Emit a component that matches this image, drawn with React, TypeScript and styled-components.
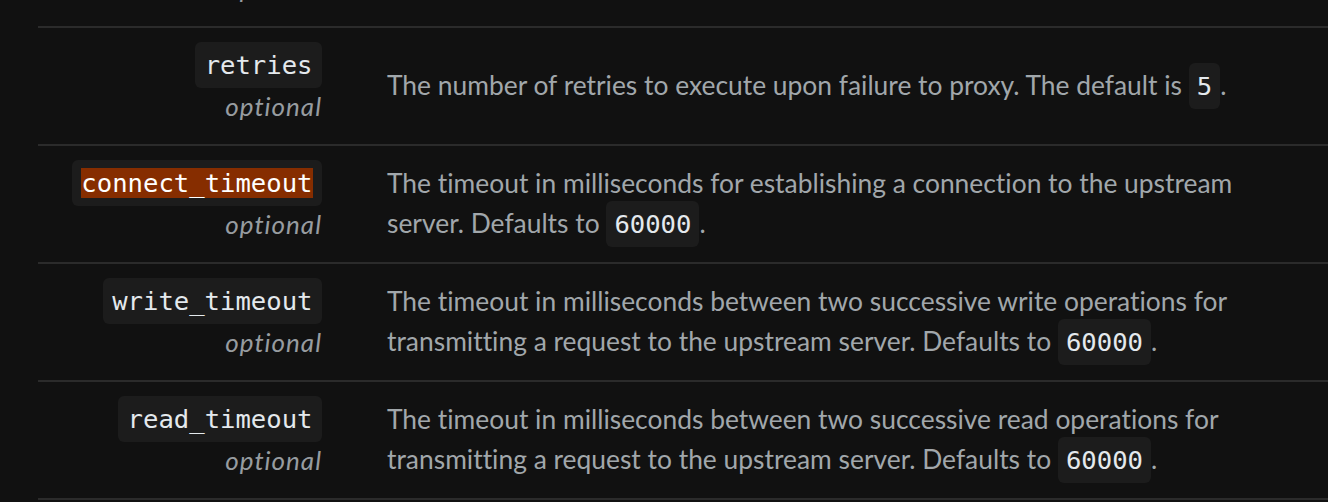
import React from "react";
import styled, { createGlobalStyle } from "styled-components";

const GlobalStyle = createGlobalStyle`
  html, body {
    margin: 0;
    padding: 0;
    background: #111111;
    overflow: hidden;
  }
  body {
    font-family: Lato, "Noto Sans", sans-serif;
    font-variant-ligatures: none;
  }
`;

const Page = styled.div`
  width: 1328px;
  height: 502px;
  overflow: hidden;
  background: #111111;
`;

const Table = styled.div`
  margin-left: 38px;
  display: flex;
  flex-direction: column;
`;

const TopStub = styled.div`
  height: 26px;
  overflow: hidden;
  display: flex;
  align-items: flex-end;
  border-bottom: 2px solid #2b2b2b;
`;

const StubCell = styled.div`
  width: 284px;
  display: flex;
  justify-content: flex-end;
  margin-bottom: 14px;
  flex-shrink: 0;
`;

const Row = styled.div`
  display: grid;
  grid-template-columns: 284px 1fr;
  column-gap: 65px;
  align-items: center;
  border-bottom: 2px solid #2b2b2b;
  padding: 14px 0;
  min-height: 88px;
`;

const NameCell = styled.div`
  display: flex;
  flex-direction: column;
  align-items: flex-end;
`;

const NameBadge = styled.code`
  font-family: "DejaVu Sans Mono", "Liberation Mono", monospace;
  font-size: 25.6px;
  line-height: 30px;
  color: #e4e9ed;
  background: #1c1c1c;
  border-radius: 6px;
  padding: 8px 9.5px;
`;

const Mark = styled.mark<{ $active?: boolean }>`
  background: ${(p) => (p.$active ? "#862d00" : "transparent")};
  color: ${(p) => (p.$active ? "#ffffff" : "inherit")};
`;

const Optional = styled.span`
  display: block;
  font-family: Lato, "Noto Sans", sans-serif;
  font-style: italic;
  font-size: 26px;
  letter-spacing: 1px;
  line-height: 36px;
  padding-bottom: 6px;
  color: #979ca0;
  flex-shrink: 0;
`;

const Description = styled.p`
  margin: 0;
  padding: 0 40px 3px 0;
  font-family: Lato, "Noto Sans", sans-serif;
  font-size: 26.4px;
  line-height: 40px;
  color: #a1a7ab;
  font-variant-ligatures: none;
`;

const InlineCode = styled.code`
  font-family: "DejaVu Sans Mono", "Liberation Mono", monospace;
  font-size: 25.6px;
  line-height: 30px;
  color: #e4e9ed;
  background: #1c1c1c;
  border-radius: 6px;
  padding: 8px 8px;
`;

type Param = {
  name: string;
  active?: boolean;
  before: string;
  code: string;
};

const params: Param[] = [
  {
    name: "retries",
    before: "The number of retries to execute upon failure to proxy. The default is ",
    code: "5",
  },
  {
    name: "connect_timeout",
    active: true,
    before:
      "The timeout in milliseconds for establishing a connection to the upstream server. Defaults to ",
    code: "60000",
  },
  {
    name: "write_timeout",
    before:
      "The timeout in milliseconds between two successive write operations for transmitting a request to the upstream server. Defaults to ",
    code: "60000",
  },
  {
    name: "read_timeout",
    before:
      "The timeout in milliseconds between two successive read operations for transmitting a request to the upstream server. Defaults to ",
    code: "60000",
  },
];

export default function App() {
  return (
    <Page>
      <GlobalStyle />
      <Table>
        <TopStub>
          <StubCell>
            <Optional>optional</Optional>
          </StubCell>
        </TopStub>
        {params.map((p) => (
          <Row key={p.name}>
            <NameCell>
              <NameBadge>
                <Mark $active={p.active}>{p.name}</Mark>
              </NameBadge>
              <Optional>optional</Optional>
            </NameCell>
            <Description>
              {p.before}
              <InlineCode>{p.code}</InlineCode>.
            </Description>
          </Row>
        ))}
      </Table>
    </Page>
  );
}
